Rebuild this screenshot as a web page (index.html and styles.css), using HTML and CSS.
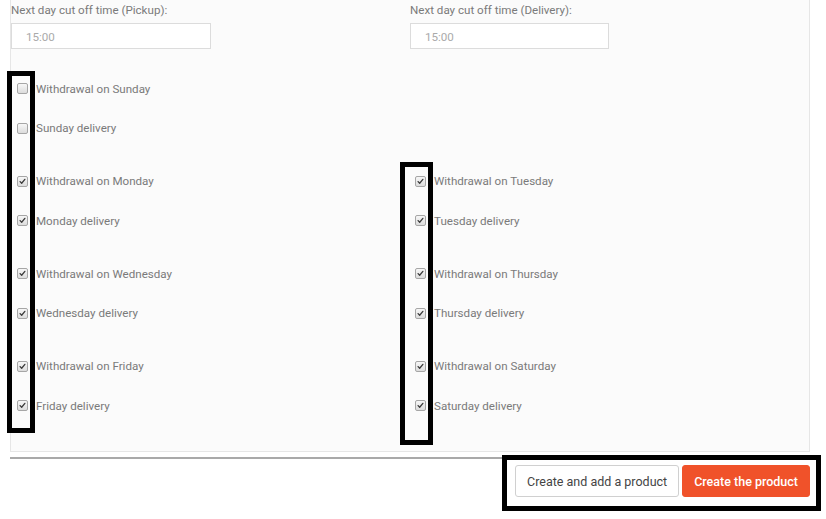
FILE: index.html
```html
<!DOCTYPE html>
<html>
<head>
<meta charset="utf-8">
<link rel="stylesheet" href="styles.css">
</head>
<body>
<div class="panel">
  <div class="cutoffs">
    <div class="field">
      <div class="label">Next day cut off time (Pickup):</div>
      <input class="time" type="text" value="15:00">
    </div>
    <div class="field">
      <div class="label">Next day cut off time (Delivery):</div>
      <input class="time time-r" type="text" value="15:00">
    </div>
  </div>
  <div class="days">
    <div class="cell">
      <label class="item"><span class="cb"></span>Withdrawal on Sunday</label>
      <label class="item"><span class="cb"></span>Sunday delivery</label>
    </div>
    <div class="cell"></div>
    <div class="cell">
      <label class="item"><span class="cb on"><svg viewBox="0 0 11 11"><path d="M2.6 5.6 L4.5 7.6 L8.4 2.9"/></svg></span>Withdrawal on Monday</label>
      <label class="item"><span class="cb on"><svg viewBox="0 0 11 11"><path d="M2.6 5.6 L4.5 7.6 L8.4 2.9"/></svg></span>Monday delivery</label>
    </div>
    <div class="cell">
      <label class="item"><span class="cb on"><svg viewBox="0 0 11 11"><path d="M2.6 5.6 L4.5 7.6 L8.4 2.9"/></svg></span>Withdrawal on Tuesday</label>
      <label class="item"><span class="cb on"><svg viewBox="0 0 11 11"><path d="M2.6 5.6 L4.5 7.6 L8.4 2.9"/></svg></span>Tuesday delivery</label>
    </div>
    <div class="cell">
      <label class="item"><span class="cb on"><svg viewBox="0 0 11 11"><path d="M2.6 5.6 L4.5 7.6 L8.4 2.9"/></svg></span>Withdrawal on Wednesday</label>
      <label class="item"><span class="cb on"><svg viewBox="0 0 11 11"><path d="M2.6 5.6 L4.5 7.6 L8.4 2.9"/></svg></span>Wednesday delivery</label>
    </div>
    <div class="cell">
      <label class="item"><span class="cb on"><svg viewBox="0 0 11 11"><path d="M2.6 5.6 L4.5 7.6 L8.4 2.9"/></svg></span>Withdrawal on Thursday</label>
      <label class="item"><span class="cb on"><svg viewBox="0 0 11 11"><path d="M2.6 5.6 L4.5 7.6 L8.4 2.9"/></svg></span>Thursday delivery</label>
    </div>
    <div class="cell">
      <label class="item"><span class="cb on"><svg viewBox="0 0 11 11"><path d="M2.6 5.6 L4.5 7.6 L8.4 2.9"/></svg></span>Withdrawal on Friday</label>
      <label class="item"><span class="cb on"><svg viewBox="0 0 11 11"><path d="M2.6 5.6 L4.5 7.6 L8.4 2.9"/></svg></span>Friday delivery</label>
    </div>
    <div class="cell">
      <label class="item"><span class="cb on"><svg viewBox="0 0 11 11"><path d="M2.6 5.6 L4.5 7.6 L8.4 2.9"/></svg></span>Withdrawal on Saturday</label>
      <label class="item"><span class="cb on"><svg viewBox="0 0 11 11"><path d="M2.6 5.6 L4.5 7.6 L8.4 2.9"/></svg></span>Saturday delivery</label>
    </div>
  </div>
</div>
<div class="rule"></div>
<div class="footer">
  <button class="btn btn-default">Create and add a product</button>
  <button class="btn btn-primary">Create the product</button>
</div>
<div class="mark mark-left"></div>
<div class="mark mark-right"></div>
<div class="mark mark-buttons"></div>
</body>
</html>
```

FILE: styles.css
```css
html, body {
  margin: 0;
  padding: 0;
  background: #ffffff;
  font-family: Roboto, "Liberation Sans", Arial, sans-serif;
  font-size: 11.6px;
  color: #7a7a7a;
}

.panel {
  margin-left: 10px;
  width: 798px;
  border: 1px solid #e6e6e6;
  border-top: none;
  background: #fbfbfb;
  padding: 2px 0 36px 0;
}

.cutoffs {
  display: grid;
  grid-template-columns: 399px 399px;
}

.label {
  line-height: 16px;
  height: 16px;
  margin-bottom: 5px;
}

.time {
  display: block;
  box-sizing: border-box;
  width: 200px;
  height: 26px;
  border: 1px solid #dcdcdc;
  background: #ffffff;
  padding: 1px 0 0 14px;
  margin: 0;
  font-family: Roboto, "Liberation Sans", Arial, sans-serif;
  font-size: 11.6px;
  color: #aaaaaa;
  outline: none;
}

.time-r {
  width: 199px;
}

.days {
  margin-top: 29px;
  display: grid;
  grid-template-columns: 398px 400px;
  row-gap: 33px;
}

.cell {
  display: flex;
  flex-direction: column;
  gap: 19.5px;
}

.item {
  display: flex;
  align-items: center;
  height: 20px;
  line-height: 20px;
  white-space: nowrap;
  padding-top: 1px;
  box-sizing: border-box;
}

.cb {
  box-sizing: border-box;
  width: 11px;
  height: 11px;
  margin: 0 8px 0 6px;
  border: 1px solid #a6a6a6;
  border-radius: 2px;
  background: linear-gradient(#f7f7f7, #dcdcdc);
  display: flex;
  flex-shrink: 0;
}

.cb svg {
  width: 9px;
  height: 9px;
}

.cb path {
  fill: none;
  stroke: #3a3a3a;
  stroke-width: 1.6;
  stroke-linecap: round;
  stroke-linejoin: round;
}

.rule {
  margin: 5px 0 0 10px;
  width: 800px;
  height: 0;
  border-top: 2px solid #a9a9a9;
}

.footer {
  margin: 6px 0 0 10px;
  width: 800px;
  display: flex;
  justify-content: flex-end;
  gap: 3px;
}

.btn {
  box-sizing: border-box;
  height: 32px;
  padding: 0 11px;
  border-radius: 3px;
  font-family: Roboto, "Liberation Sans", Arial, sans-serif;
  font-size: 12.5px;
  cursor: pointer;
}

.btn-default {
  background: #ffffff;
  border: 1px solid #d0d0d0;
  color: #444444;
}

.btn-primary {
  background: #f0522a;
  border: 1px solid #f0522a;
  color: #ffffff;
  font-weight: 500;
}

.mark {
  position: absolute;
  box-sizing: border-box;
  border: 5px solid #000000;
  pointer-events: none;
}

.mark-left {
  left: 7px;
  top: 71px;
  width: 28px;
  height: 362px;
}

.mark-right {
  left: 400px;
  top: 162px;
  width: 33px;
  height: 283px;
}

.mark-buttons {
  left: 502px;
  top: 455px;
  width: 319px;
  height: 56px;
}
```
